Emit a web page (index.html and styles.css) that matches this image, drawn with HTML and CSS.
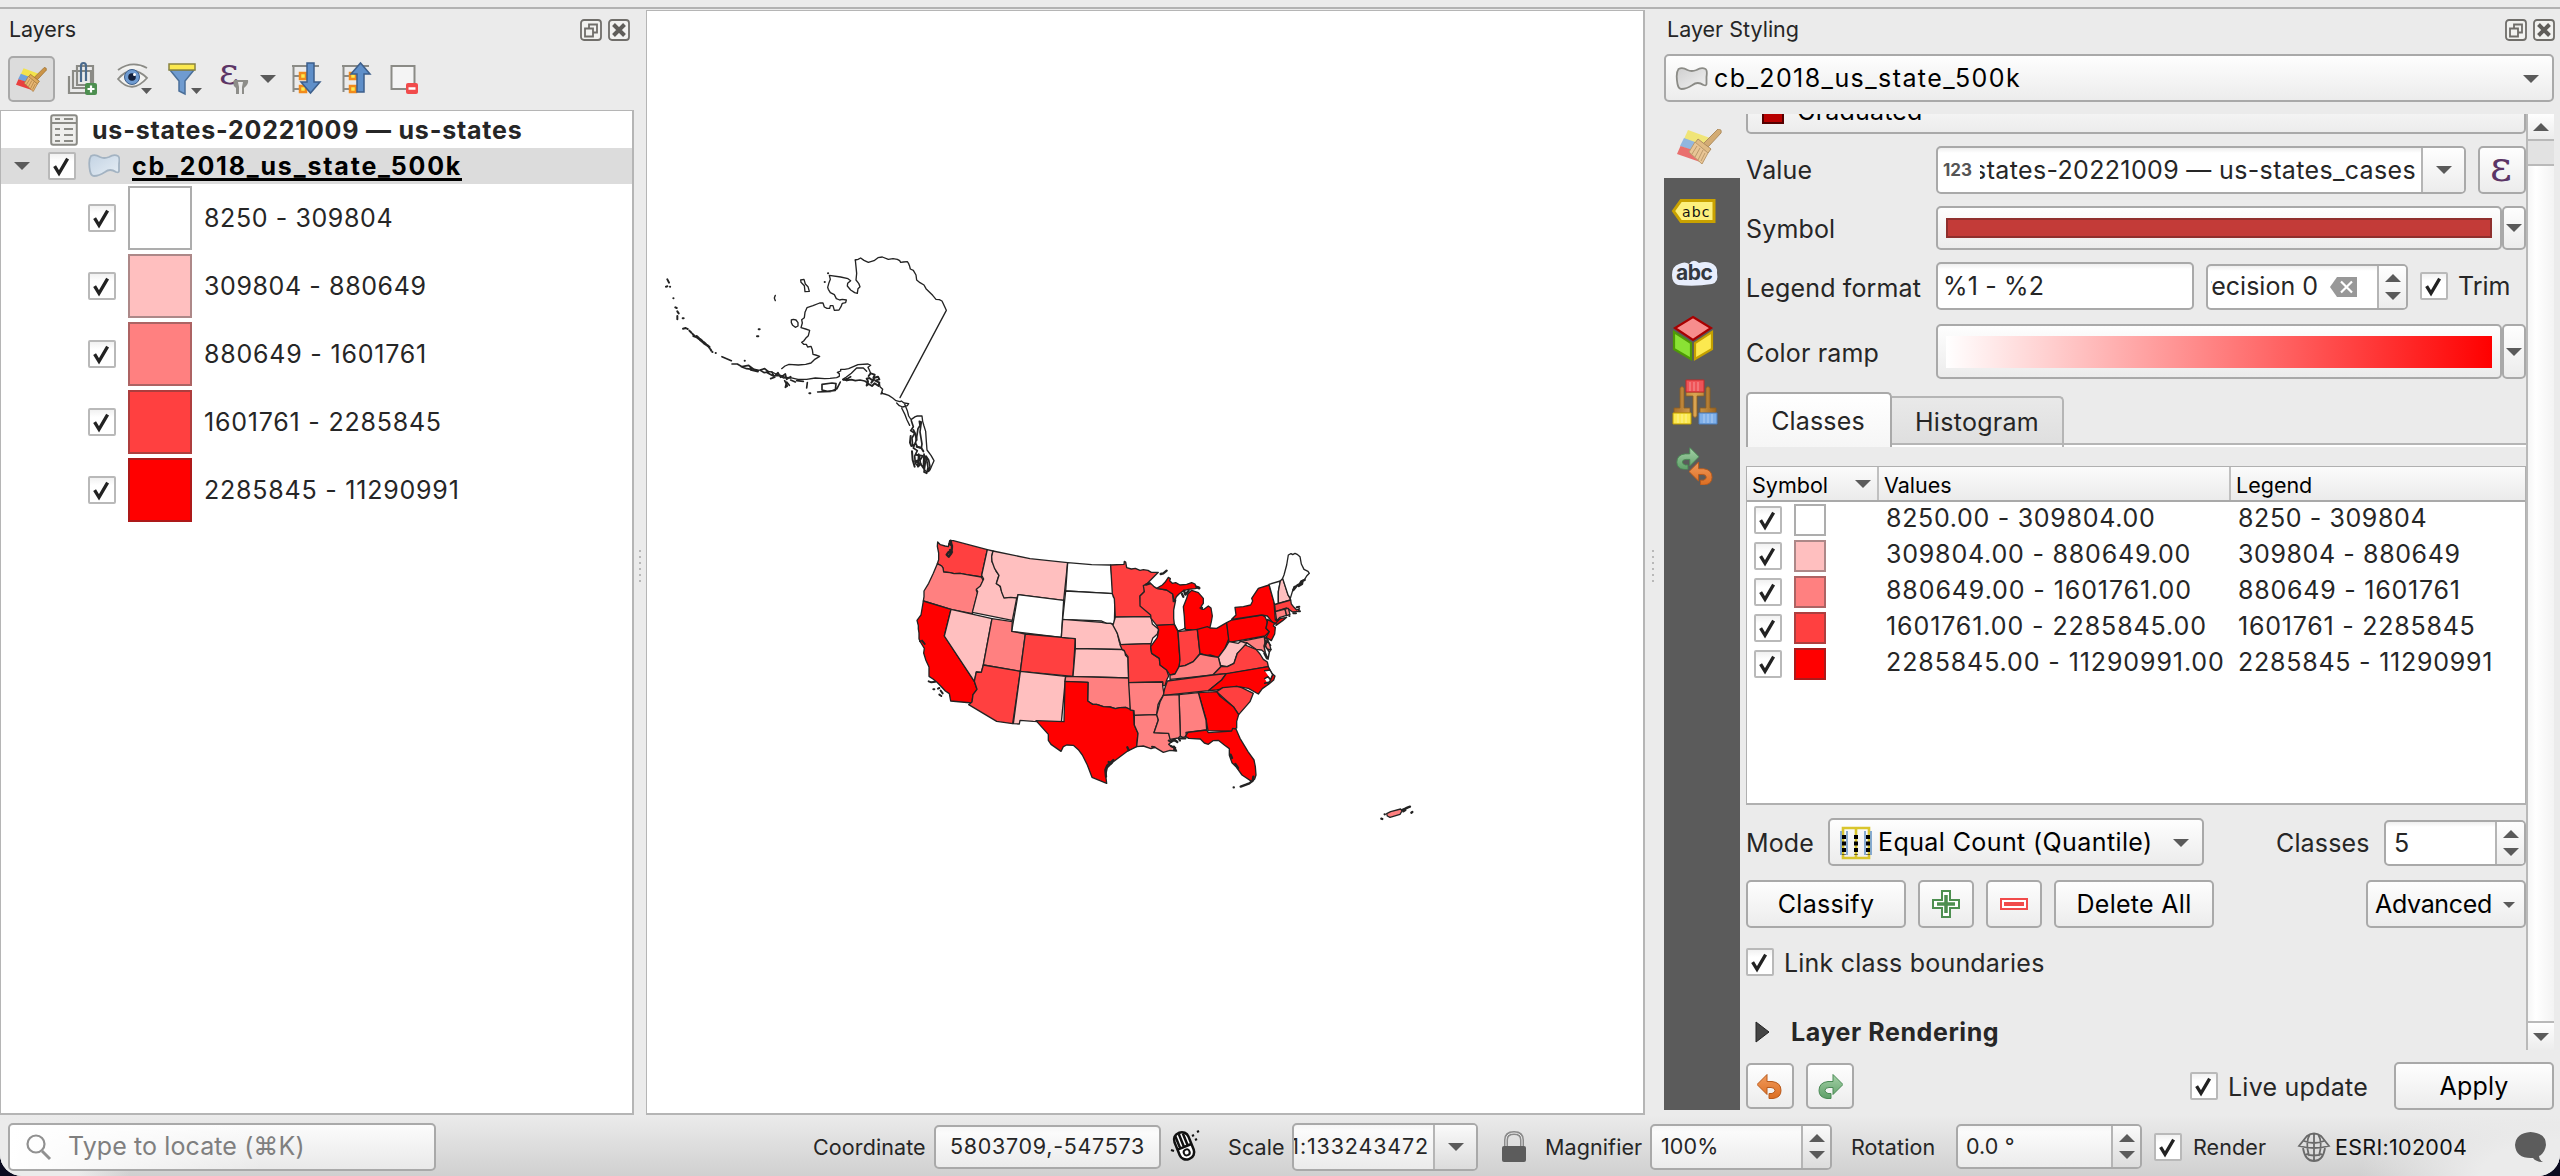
FILE: index.html
```
<!DOCTYPE html>
<html lang="en">
<head>
<meta charset="utf-8">
<title>QGIS</title>
<link rel="stylesheet" href="styles.css">
</head>
<body>
<svg width="0" height="0" class="defs" aria-hidden="true">
  <defs>
    <linearGradient id="polyBlue" x1="0" y1="0" x2="1" y2="1"><stop offset="0" stop-color="#c3d3e3"/><stop offset="1" stop-color="#e6eef5"/></linearGradient>
    <linearGradient id="polyGrey" x1="0" y1="0" x2="1" y2="1"><stop offset="0" stop-color="#cfcfcf"/><stop offset="1" stop-color="#f2f2f2"/></linearGradient>
    <linearGradient id="wood" x1="0" y1="0" x2="1" y2="0"><stop offset="0" stop-color="#a9702a"/><stop offset=".5" stop-color="#dba552"/><stop offset="1" stop-color="#9b6420"/></linearGradient>
    <linearGradient id="orange" x1="0" y1="0" x2="0" y2="1"><stop offset="0" stop-color="#f09a5c"/><stop offset="1" stop-color="#dc6e22"/></linearGradient>
    <linearGradient id="green" x1="0" y1="0" x2="0" y2="1"><stop offset="0" stop-color="#a5d2a8"/><stop offset="1" stop-color="#5f9f68"/></linearGradient>
  </defs>
  <symbol id="check" viewBox="0 0 24 24"><path d="M4.6 12.2l4.4 7.2L17.6 4.6" fill="none" stroke="#222" stroke-width="3.3"/></symbol>
  <symbol id="down" viewBox="0 0 16 8"><path d="M0 0h16L8 8z" fill="#5a5a5a"/></symbol>
  <symbol id="up" viewBox="0 0 16 8"><path d="M0 8h16L8 0z" fill="#5a5a5a"/></symbol>
  <symbol id="float" viewBox="0 0 22 22"><rect x="1" y="1" width="20" height="20" rx="3" fill="#f2f2f0" stroke="#706e6a" stroke-width="1.8"/><path d="M9 5.5h8v8h-8z" fill="none" stroke="#706e6a" stroke-width="1.8"/><path d="M5 9.500h8v8h-8z" fill="#f2f2f0" stroke="#706e6a" stroke-width="1.800"/></symbol>
  <symbol id="close" viewBox="0 0 22 22"><rect x="1" y="1" width="20" height="20" rx="3" fill="#f2f2f0" stroke="#706e6a" stroke-width="1.800"/><path d="M5.500 5.500l11 11M16.500 5.500l-11 11" stroke="#605e5a" stroke-width="4"/></symbol>
  <symbol id="brush" viewBox="0 0 45 35">
    <path d="M11 1L33 9L28 19L7 10z" fill="#f3e34c"/><path d="M7 9L29 17L25 25L3 17z" fill="#6fa3dd"/><path d="M3.500 17L22 23L26 34L0 25z" fill="#e9403f"/>
    <path d="M41 0q4 0 3 4L31 18l-5-3z" fill="#cb9447" stroke="#976a2b"/><path d="M21 10l13 10-3 4-13-10z" fill="#dda95d" stroke="#976a2b"/><path d="M18 13l13 11-6 11L12 23z" fill="#e8b775" stroke="#a87b3c"/><path d="M20 17l-5 8m8-6l-5 9m8-7l-5 10m7-7l-4 8" stroke="#a87b3c"/>
  </symbol>
  <symbol id="poly" viewBox="0 0 32 24"><path d="M3 2q4-2 9 1q4 2 9 0q5-3 9-1q2 1 1 8v7q0 2-3 1q-6-4-11 0q-6 4-11 4q-3 0-4-5Q0 6 3 2z"/></symbol>
  <symbol id="undo" viewBox="0 0 26 24"><path d="M10 0v7h5q9 1 9 9q0 7-8 8h-4v-5h3q3-1 3-3q0-3-4-3h-4v7L0 10z" fill="url(#orange)" stroke="#b85a1c"/></symbol>
  <symbol id="redo" viewBox="0 0 26 24"><path d="M16 0v7h-5q-9 1-9 9q0 7 8 8h4v-5h-3q-3-1-3-3q0-3 4-3h4v7L26 10z" fill="url(#green)" stroke="#4a8a55"/></symbol>
</svg>

<div class="window">
  <div class="topstrip"></div>
  <main class="workspace">
    <section class="layers">
      <header class="dock-title"><span>Layers</span><svg width="22" height="22"><use href="#float"/></svg><svg width="22" height="22"><use href="#close"/></svg></header>
      <div class="toolbar">
        <div class="tool active"><svg width="31" height="25"><use href="#brush"/></svg></div>
        <svg width="30" height="34" viewBox="0 0 30 34" fill="none" stroke="#8b8b86" stroke-width="2.200"><path d="M1 14v17h20M5 9v17h18V9zM9 4h16v19H9z"/><path d="M13 20V4q0-3 2.500-3T18 4v15" stroke="#4a6a8d"/><rect x="17" y="21" width="12" height="12" rx="2" fill="#4d8f50" stroke="none"/><path d="M23 23.500v7M19.500 27h7" stroke="#fff"/></svg>
        <svg width="36" height="34" viewBox="0 0 36 34"><path d="M1 8Q15-2 30 6M1 17Q15 1 30 16Q15 33 1 17z" fill="#f3f3f1" stroke="#8b8b86" stroke-width="1.800"/><circle cx="15" cy="15" r="7.500" fill="#6f9bd0" stroke="#3d5f8c"/><circle cx="15" cy="15" r="3.800" fill="#14203a"/><circle cx="17.500" cy="12.500" r="1.500" fill="#fff"/><path d="M24 26h11l-5.500 6z" fill="#5a5a5a"/></svg>
        <svg width="35" height="34" viewBox="0 0 35 34"><path d="M2 8L11 19V29l6 3V19L26 8z" fill="#6f9bd0" stroke="#4b6f99" stroke-width="1.500"/><rect x="1" y="2" width="26" height="6" fill="#fbe94f" stroke="#8a8440" stroke-width="1.500"/><path d="M23 26h11l-5.500 6z" fill="#5a5a5a"/></svg>
        <svg width="30" height="34" viewBox="0 0 30 34"><text x="-1" y="22" class="eps" font-size="38">ε</text><path d="M14 18h14q1 4-4 8v6h-8v-6q-4-3-2-8z" fill="#8d8d89"/><path d="M18 20h5l-1 5v7h-3v-7z" fill="#ebebeb"/></svg>
        <svg width="16" height="8" class="gap-s"><use href="#down"/></svg>
        <svg width="32" height="34" viewBox="0 0 32 34"><path d="M2 4h27M3.500 4v26M3.500 14h6M3.500 27h6" stroke="#8b8b86" stroke-width="2" fill="none"/><path d="M10 11h6v6h-6zM10 24h6v6h-6z" fill="#fbe94f" stroke="#f18a1c" stroke-width="2.500"/><path d="M17 1h7v19h6L20.500 31 11 20h6z" fill="#5f8fc9" stroke="#3d5f8c" stroke-width="1.500"/></svg>
        <svg width="32" height="34" viewBox="0 0 32 34" class="gap-m"><path d="M2 4h27M3.500 4v26M3.500 14h6M3.500 27h6" stroke="#8b8b86" stroke-width="2" fill="none"/><path d="M10 11h6v6h-6zM10 24h6v6h-6z" fill="#fbe94f" stroke="#f18a1c" stroke-width="2.500"/><path d="M17 30h7V12h6L20.500 1 11 12h6z" fill="#5f8fc9" stroke="#3d5f8c" stroke-width="1.500"/></svg>
        <svg width="30" height="32" viewBox="0 0 30 32" class="gap-m"><rect x="1.500" y="3" width="23" height="23" fill="#f4f4f4" stroke="#8b8b86" stroke-width="2"/><rect x="16" y="20" width="12" height="11" rx="2" fill="#f14b4b"/><path d="M18.500 25.500h7" stroke="#fff" stroke-width="2.500"/></svg>
      </div>
      <div class="tree">
        <div class="row root"><svg width="28" height="32" viewBox="0 0 28 32"><rect x="1.200" y="1.200" width="25.600" height="29.600" rx="2" fill="#efefed" stroke="#8b8b86" stroke-width="2"/><path d="M1 9h26M5 5h5m4 0h9M5 15h5m4 0h9M5 21h5m4 0h9M5 27h5m4 0h9" stroke="#8b8b86" stroke-width="2"/></svg><b class="t-us">us-states-20221009 — us-states</b></div>
        <div class="row layer"><svg width="16" height="8"><use href="#down"/></svg><i class="cb"><svg><use href="#check"/></svg></i><svg width="32" height="24" fill="url(#polyBlue)" stroke="#a3b3c2" stroke-width="1.800"><use href="#poly"/></svg><b class="t-cb">cb_2018_us_state_500k</b></div>
        <div class="row cls"><i class="cb"><svg><use href="#check"/></svg></i><i class="sw c1"></i><span>8250 - 309804</span></div>
        <div class="row cls"><i class="cb"><svg><use href="#check"/></svg></i><i class="sw c2"></i><span>309804 - 880649</span></div>
        <div class="row cls"><i class="cb"><svg><use href="#check"/></svg></i><i class="sw c3"></i><span class="w1">880649 - 1601761</span></div>
        <div class="row cls"><i class="cb"><svg><use href="#check"/></svg></i><i class="sw c4"></i><span class="w1">1601761 - 2285845</span></div>
        <div class="row cls"><i class="cb"><svg><use href="#check"/></svg></i><i class="sw c5"></i><span class="w1">2285845 - 11290991</span></div>
      </div>
    </section>
    <div class="splitter one"><i></i></div>
    <section class="map">
      <svg width="996" height="1102" viewBox="647 11 996 1102" stroke="#232323" stroke-width="4" stroke-linejoin="round" stroke-linecap="round">
        <!-- Alaska -->
        <g transform="translate(650 230) scale(.33333)" fill="none">
          <path d="M616 90l8-2 8-4 10 7 13 6 17-5 12-9 13-2 18 7 14-2 13 2 7 4 3 5 8-1 12-1 4 6 3 8 2 8 9 4L798 135 800 150 810 158 822 165 828 176 838 186 848 196 858 208 868 209 876 213 882 226 889 241 750 503"/>
          <path d="M616 90l2 20 2 20-2 20 8 10 4 10-6 6-2 14-8-2-12-8-10-12 1-8 9-8-8-6-22-5-34-5 3 12-4 10-4 14 2 6 6 10 12 6 6 12 10 4 8-2 12 2-2 8-10 2-4 10-6 10-14 1-4-14-8 0-2 8-8 0-8-4-4-12-10 0-20 8-18 6-6 14-2 16-8 6 2 10-4 14 14 4 12 4-4 16-8 8-6 8-6 4 6 6 8 0 4 8 10-2 4 10 2 14 8 2 12 4-16 10-10 10-16 4-22 2-28-2-12 5-10 8"/>
          <path d="M352 424l14 2 24 12 10 6 18-2 26 6 26 0 26-4 28 2 16-1 20-2 8-4 0-8-6-4 10-4 0-5 12 0 12-2 28-12 30-2 8 4-8 6 4 8 4 10M650 424l-10-10-20 0-16 16-16 12-10 6 12 4"/>
          <path d="M688 460l2 10 8 8-4 12 10 2 12 4 12 8 10 8 12 3 4-2 8 6 14 2-4 6-14 4-10-4-8-8M755 534l10 20 6 16 8 16M764 522l8 20 4 16 8 12M784 568l12-8 6-2 14 0 2 16 4 14 5 16 2 30 2 26 12 16 9 16-6 14-6 14-10 6-8-8"/>
          <path d="M590 451l14-2 12 3 14-2 14 3 10 6M602 440l-10 6-12 4M516 463l30-4 12 2-2 20-24 3-16-4zM503 486l40-2 18-8 10-20" stroke-width="5"/>
          <path d="M656 438l6-8 12 4-4 10 14-4 4 8-12 4 12 6-2 10-12-8-8 8-10-6-6 4 4-12-4-8 8-2 8 6 6-2-8 10" stroke-width="6"/>
          <path d="M784 572l6 18-8 12 12 8-8 14 2 24 8-6 4-20 4-26 6-10-2-12 6 2-4 30 6 36-2 12-12-4-6-12-6 16 12 8-8 16 2 22 8 8 2-36 6 30 8 12 2-42 4 26-4 28 8 4 4-18-6-34 8 12 4 20-4 14" stroke-width="5"/>
          <path d="M790 600l6 12 4 18M782 618l-2 20 4 10M786 664l2 26 6 20M800 650l14 4 6 10M798 674l20 4-8 12-14 4 16 8-8 8" stroke-width="6"/>
          <path d="M99 296l8-2 6 3M118 302l14 14 8 6 10 8 14 12 12 8 8 12M130 318l14 5M140 318l14 12 16 14 10 8" stroke-width="6" stroke-dasharray="9 5"/>
          <path d="M216 380l14 6 14 6M246 402l16 0 14 8 20-4 10 12-16-2-16-6M296 406l16 12 14 3M302 420l22 5M330 420l14-4 12 10-14 2zM352 428l18 10 20-2 20 8 12 0M366 426l6 14 12-12 8 14 14-10 4 16 12-8M362 446l12-4M404 452l8 16-6 4 4-16 8 10M422 450l14 6M440 452l20 2M472 458l-2 16" stroke-width="5"/>
          <path d="M52 148l5 10M48 170l4-1M60 170h.5M70 205h.5M76 232l4 2M82 244l4 6M82 258v10M98 265h3M187 366h.5M197 369h.5M284 392h.5M326 298h3M321 319h4M534 130h.5M524 156h.5M478 490h3" stroke-width="6"/>
          <path d="M452 150l10-2 4 14 8 8 4 14-13 1-2-18-10-10zM376 196l-3 8 3 8M424 270l6-2 8 2 6 8 0 10-8 4-8-6-4-8zM697 487l-4 5"/>
        </g>
        <!-- Lower 48, western half -->
        <g transform="translate(900 520) scale(.33333)">
          <path class="m4" d="M113 66l8 8 14 4 10 2 4-18 11 0 102 27-18 82-44-7-20-4-18 1-12-3-19-2-2-12-4-6-13-7 4-12 0-20-4-20z"/>
          <path d="M152 62l4 18-2 20-8 10-6-6 6-8 8 4M148 72l8 4M150 90l6 6" fill="none" stroke-width="7"/>
          <path class="m3" d="M112 131l13 7 4 6 2 12 19 2 12 3 18-1 20 4 44 7 6 11-6 12-6 10-9 7 4 8-16 62-64-13-83-25 2-13 0-17 14-23 14-30z"/>
          <path class="m5" d="M70 243l83 25-20 80 90 136 8 24-12 16-2 14 0 11-65-6-4-22-12-8-11-12-14-14-12-10-12-8 0-14 0-14-10-22-6-20 2-14-10-16-6-12 0-18-2-12 0-10-4-16 6-8 6-8z"/>
          <path d="M60 364h.5M66 362l8 10M86 484l8 3 12-2M100 508h3M114 506l4-2M122 512l6 8M118 524l6 4" stroke-width="6" fill="none"/>
          <path class="m2" d="M153 268l123 28-26 138-6 23-15-1-6 28-90-136z"/>
          <path class="m2" d="M262 89l17 4-4 17 1 15 8 14 4 14 9 12-4 12-4 13 10 6 6 18 7 16 20-1 19 1-14 71-120-24 16-62-4-7 12-10 10-21-6-11z"/>
          <path class="m2" d="M279 93l111 23 113 12-12 113-137-17-3 10-19-2-20 2-7-17-4-18-12-8 8-25-13-20-8-22-1-14z"/>
          <path class="m1" d="M354 224l137 17-7 111-149-18z"/>
          <path class="m3" d="M276 296l61 9-2 29 41 8-15 112-111-19z"/>
          <path class="m4" d="M250 435l111 19-23 157-48-7-84-50 10-8 3-22 12-16-8-24 6-28 15 1z"/>
          <path class="m4" d="M376 342l150 14-7 113-158-15z"/>
          <path class="m2" d="M361 454l136 15-13 139-84-4-40-3-2 11-18-1z"/>
          <path class="m1" d="M503 128l72 6 57 1 4 40 4 46-143-8z"/>
          <path class="m1" d="M497 213l143 8 0 10 5 4-2 79-10-4-13 0-15-7-117-5z"/>
          <path class="m2" d="M488 298l117 9 15 3 12 0 11 6 9 24 6 26 10 22-142-3v-29l-42-4z"/>
          <path class="m2" d="M526 386l142 3 8 6 0 10 8 8 2 61-167-5z"/>
          <path class="m3" d="M497 469l189 5 5 46v50l-14-8-17 1-14 3-16-5-20-1-20-7-12 0-15-10 1-56-69-3z"/>
          <path class="m5" d="M495 484l69 3-1 56 15 10 12 0 20 7 20 1 16 5 14-3 17-1 23 10 3 43 11 25-4 40-30 15-40 30-18 18-5 22 3 25-44-18-14-37-15-30-12-16-15-13-20-1-10 5-7 14-30-21-8-12 0-18-37-41 84 3z"/>
          <path d="M682 682l4 8M640 720l-18 16-6 14 2 20M626 726l8 4" fill="none" stroke-width="7"/>
          <path class="m4" d="M632 135l40-2 1-9 4 2 3 17 14 4 12-2 14 6 10-2 14 2 10 6 21 0-40 40-2 18-13 13 2 27 28 25 3 9-107 3-3-56-6-15z"/>
          <path class="m2" d="M646 291l107-1 4 22 19 16-4 14-14 13-5 16-91 3-10-34-13-24z"/>
          <path class="m4" d="M660 374l93-3-1 13 3 16 23 15 2 20 20 15 6 18-6 12-5 17-7 0 0-11-102 2-2-78-8-10-3-8-7-4z"/>
          <path class="m3" d="M686 488l102-2 0 12 4 24-12 20-6 12-4 30-67 2-1-14-11-2z"/>
          <path class="m3" d="M703 586l67-2 5 16-13 38 44 2 9 25-9 8 20 14 4 6-20-2-20 6-25-15-12 4-23-8-20 2 4-40-11-25z"/>
          <path d="M756 680l8 2M806 662l8 4 6-8M812 678l14 6-4 6M836 656l4 6" fill="none" stroke-width="6"/>
        </g>
        <!-- Lower 48, eastern half -->
        <g transform="translate(1130 520) scale(.33333)">
          <path class="m4" d="M40 197l16-8 7 2 8 8 9 6 30 5 18 12 2 23 7-5-6 30 0 25 2 18-53 3-17-21-1-10-32-27 0-30 13-13z"/>
          <path class="m5" d="M80 205l17-10 8-8 10-15 6 4-2 6 8 8 10-2 13 7 20-2 15-5 10 4 2 6 12 4-14 4-20 2-14 4-14 10-8 8-6 15-5-23-18-12z"/>
          <path class="m5" d="M165 328l-2-38-3-30 10-25 4-14 11-10 20 7 15 17 0 15-6 8 2 10 6 0 13-10 8 6 2 12 2 12-3 17-4 17-8 6-6 3z"/>
          <path d="M92 162l8-2 10-8M48 194l12-4M156 222l4 8M162 212l4 12 10-12M200 201l8 4M212 264h4" fill="none" stroke-width="7"/>
          <path d="M133 313l11 20 14-5 8-4" fill="none"/>
          <path class="m5" d="M80 316l53-3 11 22 6 85-2 20-13 22-15 3-10-15-20-15-2-20-23-15-3-20 20-28 4-22z"/>
          <path class="m4" d="M144 335l58-7 8 72-20 25-25 12-18 3 3-20z"/>
          <path class="m5" d="M202 328l30-8 8 4 20 1 30-17 7 47-12 30-20 27-25-7-10 2-20-7z"/>
          <path class="m5" d="M290 308l15-8 90-15 10 5 7 15-4 20 10 10-13 13-108 19z"/>
          <path class="m5" d="M305 298l13-13-3-23 25-2 22-5 6-12-3-8 20-30 32-10 15 50 4 55 26-3-22 14-12-3-16-20-17-3z"/>
          <path class="m5" d="M412 298l22 12-4 8 6 4-2 20-10 20-16-10 10-17-10-10 4-17z"/>
          <path class="m1" d="M417 193l34-10-6 32v35l-11 4z"/>
          <path class="m2" d="M451 183l7-8 17 50 7 15-37 10v-35z"/>
          <path class="m1" d="M458 175l4-10 8-30 5-30 8-4 5 3 7-4 8 4 7 6 4 22 8 16 12 6 4 6-8 8-6 10-12 10-8 8-12 4-4 12-7 23-7-10z"/>
          <path d="M524 180l-10 4-8 14 10-6 2-10-8 10-8 4M498 200l-8 10" fill="none" stroke-width="7"/>
          <path class="m4" d="M434 254l48-14 2 12 8 10 8 8 8-4-2 8-18 2-12-8-6-4-34 11z"/>
          <path class="m3" d="M436 275l29-8 5 19-20 6-10 10z"/>
          <path class="m3" d="M465 267l10-2 5 18-10 4z"/>
          <path class="m5" d="M438 308l12-12 20-4-12 10-20 14z"/>
          <path d="M500 262l8-2M478 288h.5M490 280l8 0M506 274h4" fill="none" stroke-width="6"/>
          <path class="m3" d="M330 365l75-15 3 35 15 4-11 16-17-15-17-2-28-20-20 6z"/>
          <path class="m3" d="M403 352l10 6 6 16 4 15-15-2z"/>
          <path class="m2" d="M265 412l20-27 12-20 28 5 8-6 17 6-15 20-13 10-10 30-20 10-20-4z"/>
          <path class="m4" d="M248 465l24-25 20 0 20-10 10-30 23-25 33 13 12 14 10 16 12 8 3 14-115 20z"/>
          <path class="m3" d="M120 478v-13l15-3 12-22 18-3 25-12 20-23 30 6 25 4 7 28-24 25-68 7z"/>
          <path class="m4" d="M112 483l136-18 41-4-14 19-40 32-135 14 4-20z"/>
          <path class="m5" d="M289 461l126-21 10 20 10 8-4 12-14 12-20 14-12 16-30-17-35-6-60 11-25 2 40-32z"/>
          <path d="M408 360l-6 18 4 20 8 20 4-22-12-18 6-16 10 14M402 400l8 16M404 452l16-2 8 14-6 14M404 476l10-6 8 10-8 12M404 490l14-4" fill="#fff" stroke-width="4.500"/>
          <path class="m4" d="M260 515l18-12 42-4 15 4 35 17-10 25-34 39-16-24z"/>
          <path class="m5" d="M205 518l55-3 10 14 40 31 16 24-6 20 0 20-5 2-1 8-80-2-6-35z"/>
          <path class="m3" d="M147 524l58-6 23 82 2 30-62 7 2 13-12 2-7-4z"/>
          <path class="m3" d="M100 526l47-2 4 124-6 6-25 4-4-18-44-2 13-38-5-16 10-38z"/>
          <path d="M124 664l10-4 8 6M132 680l4 10M150 655l16 0" fill="none" stroke-width="7"/>
          <path class="m5" d="M174 637l56-7 5 8 70-5 3-8 10 2 12 28 24 40 18 25 4 20 2 25-4 12-8 8-30-20-18-25-12-12-8-22 0-20-14-10-19-15-16 1-14 11-12-4-12-12-35-2-10-6z"/>
          <path d="M302 704l4 10M316 732l8 12M370 770l-2 12-10 8-10 4M348 794l-16 6M311 802h.5" fill="none" stroke-width="7"/>
        </g>
        <!-- Puerto Rico -->
        <g transform="translate(1340 780) scale(.33333)"><path class="m3" d="M140 101l12-6 30-8 4 6-6 10-30 9-8-4z"/><path d="M186 90l10-4 8-4 6-2M190 94l6-4M214 98l3-2M124 116l3 1M134 103h.5" stroke-width="7"/></g>
      </svg>
    </section>
    <div class="splitter two"><i></i></div>
    <section class="styling">
      <header class="dock-title"><span>Layer Styling</span><svg width="22" height="22"><use href="#float"/></svg><svg width="22" height="22"><use href="#close"/></svg></header>
      <div class="combo layer-combo"><svg width="33" height="24" fill="url(#polyGrey)" stroke="#8b8b86" stroke-width="1.800"><use href="#poly"/></svg><span class="wide">cb_2018_us_state_500k</span><svg width="16" height="8"><use href="#down"/></svg></div>
      <div class="body">
        <nav class="tabs">
          <div class="tab on"><svg width="45" height="35" class="faded"><use href="#brush"/></svg></div>
          <div class="tab"><svg width="44" height="26" viewBox="0 0 44 26"><path d="M9 1.500h33v21H9L1.500 12z" fill="#fdf07c" stroke="#c9a200" stroke-width="3"/><text x="10" y="18" font-family="DejaVu Sans" font-size="14" letter-spacing="1.200" fill="#111">abc</text></svg></div>
          <div class="tab"><svg width="48" height="30" viewBox="0 0 48 30"><path d="M8 5Q14 2 18 5Q22-1 28 4Q34 2 40 4Q47 7 46 14Q48 23 41 25Q24 28 7 26Q1 24 1 16Q1 7 8 5z" fill="#e8eefc"/><text x="5" y="21" font-family="Inter" font-weight="bold" font-size="21" textLength="37" fill="#33383f">abc</text></svg></div>
          <div class="tab"><svg width="42" height="46" viewBox="0 0 42 46" stroke-width="2.200"><path d="M21 2l18 11-18 12L3 13z" fill="#f78d8d" stroke="#a80000"/><path d="M2 17l17 11v16L2 34z" fill="#8ae234" stroke="#4e9a06"/><path d="M40 17L23 28v16l17-10z" fill="#fce94f" stroke="#c4a000"/></svg></div>
          <div class="tab"><svg width="46" height="46" viewBox="0 0 46 46"><path d="M8 9q2-3 4 0v20h6v5H2v-5h6zM34 9q2-3 4 0v20h6v5H28v-5h6zM14 13h18v4h-7v20q-2 3-4 0V17h-7z" fill="url(#wood)" stroke="#8d5d1f" stroke-width=".8"/><path d="M14 1h18v12H14z" fill="#ef5357" stroke="#c02a2a"/><path d="M1 34h18v11H1z" fill="#fce94f" stroke="#c4a000"/><path d="M27 34h18v11H27z" fill="#7fb0ea" stroke="#4c7fbd"/><path d="M18 3v9m4-9v9m4-9v9M6 35v9m4-9v9m4-9v9M32 35v9m4-9v9m4-9v9" stroke="#fff" stroke-opacity=".4"/></svg></div>
          <div class="tab"><svg width="40" height="40" viewBox="0 0 40 40"><svg width="24" height="23" x="0" y="1" viewBox="0 0 26 24"><use href="#redo"/></svg><svg width="25" height="23" x="14" y="16" viewBox="0 0 26 24"><use href="#undo"/></svg></svg></div>
        </nav>
        <div class="page">
          <div class="scroll">
            <div class="form">
              <div class="combo graduated"><i></i><span>Graduated</span></div>
              <div class="line value"><label>Value</label><div class="field expr"><b>123</b><span class="clip"><span>us-states-20221009 — us-states_cases</span></span><em><svg width="16" height="8"><use href="#down"/></svg></em></div><div class="btn epsbtn"><svg width="32" height="36" viewBox="0 0 32 36"><text x="4" y="29" class="eps" font-size="42">ε</text></svg></div></div>
              <div class="line symbol"><label>Symbol</label><div class="btn bar"><i class="solid"></i></div><div class="btn mini"><svg width="16" height="8"><use href="#down"/></svg></div></div>
              <div class="line legend"><label>Legend format</label><div class="field fmt">%1 - %2</div><div class="field spin prec"><span class="clip"><span>Precision 0</span></span><svg width="27" height="20" viewBox="0 0 27 20"><path d="M7 0h20v20H7L0 10z" fill="#989898"/><path d="M11 4.500l11 11m0-11l-11 11" stroke="#fff" stroke-width="2.200"/></svg><em><svg width="16" height="8"><use href="#up"/></svg><svg width="16" height="8"><use href="#down"/></svg></em></div><i class="cb"><svg><use href="#check"/></svg></i><span class="trim">Trim</span></div>
              <div class="line ramp"><label>Color ramp</label><div class="btn bar"><i class="gradient"></i></div><div class="btn mini"><svg width="16" height="8"><use href="#down"/></svg></div></div>
              <div class="tabbar"><div class="t-on">Classes</div><div class="t-off">Histogram</div><div class="t-rest"></div></div>
              <div class="table">
                <div class="thead"><div>Symbol<svg width="16" height="8"><use href="#down"/></svg></div><div>Values</div><div>Legend</div></div>
                <div class="trow"><div><i class="cb"><svg><use href="#check"/></svg></i><i class="sw c1"></i></div><span class="w0">8250.00 - 309804.00</span><span>8250 - 309804</span></div>
                <div class="trow"><div><i class="cb"><svg><use href="#check"/></svg></i><i class="sw c2"></i></div><span>309804.00 - 880649.00</span><span>309804 - 880649</span></div>
                <div class="trow"><div><i class="cb"><svg><use href="#check"/></svg></i><i class="sw c3"></i></div><span class="w2">880649.00 - 1601761.00</span><span class="w1">880649 - 1601761</span></div>
                <div class="trow"><div><i class="cb"><svg><use href="#check"/></svg></i><i class="sw c4"></i></div><span class="w2">1601761.00 - 2285845.00</span><span class="w1">1601761 - 2285845</span></div>
                <div class="trow"><div><i class="cb"><svg><use href="#check"/></svg></i><i class="sw c5"></i></div><span class="w2">2285845.00 - 11290991.00</span><span class="w1">2285845 - 11290991</span></div>
              </div>
              <div class="line mode"><label>Mode</label><div class="combo quant"><svg width="32" height="34" viewBox="0 0 32 34"><path d="M3 2h26v30H3zM16 2v30" fill="none" stroke="#d9c52c" stroke-width="2.600"/><path d="M1 5v24M7 5v24M25 5v24M31 5v24" stroke="#6b98c9" stroke-width="1.600"/><path d="M4 9v20M16 9v20M28 9v20" stroke="#000" stroke-width="4" stroke-dasharray="4 2.500"/></svg><span>Equal Count (Quantile)</span><svg width="16" height="8"><use href="#down"/></svg></div><label class="cl">Classes</label><div class="field spin num"><span>5</span><em><svg width="16" height="8"><use href="#up"/></svg><svg width="16" height="8"><use href="#down"/></svg></em></div></div>
              <div class="line actions"><div class="btn classify">Classify</div><div class="btn sq"><svg width="28" height="28" viewBox="0 0 28 28"><path d="M10 1h8v9h9v8h-9v9h-8v-9H1v-8h9z" fill="#fff" stroke="#4d8f50" stroke-width="2"/><path d="M14 5v18M5 14h18" stroke="#4d8f50" stroke-width="3.500"/></svg></div><div class="btn sq"><svg width="28" height="12" viewBox="0 0 28 12"><rect x="1" y="1" width="26" height="10" fill="#fff" stroke="#f14b4b" stroke-width="2"/><path d="M4 6h20" stroke="#f14b4b" stroke-width="4"/></svg></div><div class="btn classify">Delete All</div><div class="btn adv">Advanced<svg width="12" height="6"><use href="#down"/></svg></div></div>
              <div class="line link"><i class="cb"><svg><use href="#check"/></svg></i><span>Link class boundaries</span></div>
              <div class="line rendering"><svg width="15" height="22" viewBox="0 0 15 22"><path d="M1 1l13 10L1 21z" fill="#444" stroke="#222"/></svg><b>Layer Rendering</b></div>
            </div>
            <div class="scrollbar"><div class="sb up"><svg width="16" height="8"><use href="#up"/></svg></div><div class="thumb"></div><div class="sb dn"><svg width="16" height="8"><use href="#down"/></svg></div></div>
          </div>
          <div class="footer"><div class="btn hist"><svg width="26" height="25"><use href="#undo"/></svg></div><div class="btn hist"><svg width="26" height="25"><use href="#redo"/></svg></div><i class="cb"><svg><use href="#check"/></svg></i><span>Live update</span><div class="btn apply">Apply</div></div>
        </div>
      </div>
    </section>
  </main>
  <footer class="status">
    <div class="field locate"><svg width="26" height="26" viewBox="0 0 26 26" fill="none" stroke="#909090"><circle cx="10" cy="10" r="8.500" stroke-width="2.200"/><path d="M16 17l8 8" stroke-width="3"/></svg><span>Type to locate (⌘K)</span></div>
    <span>Coordinate</span>
    <div class="field coord">5803709,-547573</div>
    <svg width="32" height="34" viewBox="0 0 32 34"><g transform="rotate(-22 14 17)"><rect x="7" y="2" width="15" height="28" rx="7" fill="#fff" stroke="#111" stroke-width="2.500"/><path d="M10 4v12M14 3v13M18 4v12M7 17h15" stroke="#111" stroke-width="2.500"/><circle cx="14.500" cy="23" r="3" fill="none" stroke="#111" stroke-width="2"/></g><path d="M22 6l2-1M27 2l2-1M25 10l2-1M1 20l3 1" stroke="#111" stroke-width="2.200"/></svg>
    <span>Scale</span>
    <div class="field scale"><span class="clip"><span>1:133243472</span></span><em><svg width="16" height="8"><use href="#down"/></svg></em></div>
    <svg width="26" height="32" viewBox="0 0 26 32" class="lock"><path d="M5 16V9q0-7 8-7t8 7v7" fill="none" stroke="#8a8a8a" stroke-width="4"/><path d="M5 16V9q0-7 8-7t8 7v7" fill="none" stroke="#e8e8e8" stroke-width="1"/><rect x="1" y="15" width="24" height="16" rx="2" fill="#5c5c5c"/></svg>
    <span>Magnifier</span>
    <div class="field spin mag"><span>100%</span><em><svg width="16" height="8"><use href="#up"/></svg><svg width="16" height="8"><use href="#down"/></svg></em></div>
    <span>Rotation</span>
    <div class="field spin rot"><span>0.0 °</span><em><svg width="16" height="8"><use href="#up"/></svg><svg width="16" height="8"><use href="#down"/></svg></em></div>
    <i class="cb"><svg><use href="#check"/></svg></i>
    <span>Render</span>
    <svg width="32" height="30" viewBox="0 0 32 30" fill="none" stroke="#6a6a6a" stroke-width="1.800"><path d="M9 4Q16-1 23 4L31 14Q16 18 1 14zM6 9q10 4 20 0M5 16q2 13 11 13t11-13M8 22q8 3 16 0M12 2Q7 10 11 24M20 2q5 8 1 22M16 1v28"/></svg>
    <span class="crs">ESRI:102004</span>
    <svg width="33" height="32" viewBox="0 0 33 32"><path d="M16.500 1Q32 2 32 14Q31 22 25 25Q25 29 29 31Q22 31 19 27Q2 28 1 14Q2 2 16.500 1z" fill="#5c5c5c"/></svg>
  </footer>
</div>
</body>
</html>
```
FILE: styles.css
```
* { box-sizing: border-box; }
body { margin: 0; width: 2560px; height: 1176px; overflow: hidden; background: #0b0b20; font-family: Inter, "Noto Sans", sans-serif; font-size: 25px; line-height: 1; letter-spacing: .15px; color: #262626; }
.defs { position: absolute; }
svg { display: block; flex: none; overflow: visible; }
i { font-style: normal; display: block; flex: none; }
em { font-style: normal; }
span, b, label { white-space: nowrap; }
.window { width: 2560px; height: 1176px; background: #ebebeb; border-radius: 0 0 22px 22px; overflow: hidden; display: flex; flex-direction: column; }
.topstrip { height: 9px; border-bottom: 2px solid #b2b2b2; }
.workspace { height: 1106px; display: flex; }

.cb { width: 28px; height: 28px; border: 2px solid #b9b9b9; border-radius: 2px; background: linear-gradient(#f1f1f1, #fff 30%); }
.cb svg { width: 24px; height: 24px; }
.sw { border: 2px solid rgba(60, 60, 60, .42); background-clip: border-box; }
.c1 { background-color: #fff; }
.c2 { background-color: #ffbfbf; }
.c3 { background-color: #ff8080; }
.c4 { background-color: #ff4040; }
.c5 { background-color: #f00; }
.m1 { fill: #fff; }
.m2 { fill: #ffbfbf; }
.m3 { fill: #ff8080; }
.m4 { fill: #ff4040; }
.m5 { fill: #f00; }
.eps { font-family: "DejaVu Serif", serif; fill: #5c3566; }

.dock-title { height: 41px; display: flex; align-items: center; gap: 6px; font-size: 21.5px; letter-spacing: 0; }
.dock-title span { flex: 1; }
.layers { width: 634px; }
.layers .dock-title { padding: 0 4px 0 9px; letter-spacing: -.1px; }
.toolbar { height: 60px; padding: 0 0 2px 8px; display: flex; align-items: center; }
.tool.active { width: 47px; height: 46px; border: 2px solid #a9a9a9; border-radius: 5px; background: #dcdcdc; display: flex; align-items: center; justify-content: center; margin-right: 13px; }
.toolbar > svg { margin-right: 18px; }
.toolbar > svg:nth-child(2) { margin-right: 19px; }
.toolbar > svg:nth-child(3) { margin-right: 15px; }
.toolbar > svg:nth-child(4) { margin-right: 17px; }
.toolbar > svg:nth-child(5) { margin-right: 10px; }
.toolbar > svg:nth-child(6) { margin-right: 14px; }
.tree { height: 1005px; background: #fff; border: 2px solid #b5b5b5; border-width: 1px 2px 2px 1px; }
.row { display: flex; align-items: center; }
.root { height: 37px; padding-left: 49px; gap: 14px; }
.t-us { font-size: 25px; letter-spacing: .8px; padding-top: 1px; }
.layer { height: 36px; background: #dcdcdc; padding-left: 13px; color: #000; }
.layer .cb { margin: 0 12px 0 18px; }
.t-cb { margin-left: 12px; letter-spacing: 1.82px; position: relative; line-height: 36px; }
.t-cb::after { content: ""; position: absolute; left: 0; right: 0; top: 30px; height: 3px; background: #000; }
.cls { height: 68px; padding-left: 87px; }
.cls .sw { width: 64px; height: 64px; margin: 0 12px 0 12px; }
.cls span { letter-spacing: .6px; }
.cls .w1 { letter-spacing: .78px; }

.splitter { display: flex; align-items: center; justify-content: center; }
.splitter.one { width: 12px; }
.splitter.two { width: 19px; padding-right: 3px; }
.splitter i { width: 2px; height: 32px; margin-top: 8px; background: repeating-linear-gradient(#b8b8b8 0 2px, transparent 2px 6px); }
.map { width: 999px; height: 1105px; margin-top: 1px; background: #fff; border: 2px solid #b5b5b5; border-width: 1px 2px 2px 1px; overflow: hidden; }

.styling { flex: 1; }
.styling .dock-title { padding: 0 5px 4px 3px; height: 45px; }
.combo, .btn { border: 2px solid #a9a9a9; border-radius: 5px; background: linear-gradient(#fefefe, #ececec); color: #000; display: flex; align-items: center; }
.layer-combo { width: 890px; height: 48px; padding: 1px 13px 0 9px; }
.layer-combo span { flex: 1; margin-left: 6px; letter-spacing: 1.42px; }
.body { display: flex; margin-top: 12px; height: 996px; }
.tabs { width: 76px; }
.tab { background: #5b5b5b; display: flex; align-items: center; padding-left: 8px; }
.tab.on { height: 64px; background: none; padding: 1px 0 0 13px; }
.faded { opacity: .72; }
.tab:nth-child(2) { height: 64px; padding-top: 3px; }
.tab:nth-child(3) { height: 60px; padding: 3px 0 0 7px; }
.tab:nth-child(4) { height: 72px; }
.tab:nth-child(5) { height: 56px; }
.tab:nth-child(6) { height: 680px; align-items: flex-start; padding: 16px 0 0 11px; }
.page { margin-left: 6px; width: 808px; }
.scroll { height: 936px; display: flex; overflow: hidden; }
.form { width: 780px; }
.line { display: flex; align-items: center; }
label { width: 190px; padding-top: 2px; }
.field { border: 2px solid #a9a9a9; border-radius: 5px; background: linear-gradient(#efefef, #fff 5px); display: flex; align-items: center; overflow: hidden; }
.field em { align-self: stretch; border-left: 2px solid #b5b5b5; background: linear-gradient(#fefefe, #ececec); display: flex; flex-direction: column; align-items: center; justify-content: center; gap: 10px; }
.clip { display: flex; justify-content: flex-end; overflow: hidden; height: 34px; align-items: center; }
.graduated { height: 48px; margin-top: -28px; padding: 2px 0 0 14px; }
.graduated i { width: 22px; height: 22px; margin-right: 13px; background: #b80000; border: 2px solid #500; position: relative; top: 2px; }
.value { margin-top: 12px; height: 48px; }
.value label { padding-top: 1px; }
.expr { width: 530px; height: 48px; }
.expr b { font-size: 17px; color: #555; margin-left: 5px; width: 37px; letter-spacing: 0; }
.expr .clip { width: 436px; letter-spacing: .35px; }
.expr em { width: 43px; margin-left: auto; }
.epsbtn { width: 48px; height: 48px; margin-left: 12px; justify-content: center; }
.symbol { margin-top: 12px; height: 44px; }
.btn { justify-content: center; }
.bar { width: 566px; height: 100%; }
.bar i { width: 546px; }
.solid { height: 20px; background: #c33b38; border: 2px solid #8f2f2d; }
.gradient { height: 32px; background: linear-gradient(90deg, #fff, #f00); }
.mini { width: 24px; height: 100%; }
.legend { margin-top: 12px; height: 48px; }
.legend label { padding-top: 4px; }
.fmt { width: 258px; height: 48px; padding-left: 5px; }
.prec { width: 202px; height: 46px; margin: 1px 12px 0; }
.prec .clip { width: 107px; margin-left: 3px; letter-spacing: 0; }
.prec > svg { margin-left: 12px; }
.spin em { width: 29px; margin-left: auto; }
.trim { margin-left: 10px; padding-top: 1px; letter-spacing: 0; }
.ramp { margin-top: 14px; height: 55px; }
.ramp label { padding-top: 3px; }
.tabbar { margin-top: 13px; height: 55px; display: flex; align-items: flex-end; }
.t-on { width: 146px; height: 55px; border: 2px solid #a9a9a9; border-bottom: 0; border-radius: 5px 5px 0 0; background: linear-gradient(#fff, #f6f6f6); display: flex; align-items: center; justify-content: center; padding: 1px 2px 0 0; }
.t-off { width: 172px; height: 51px; border: 2px solid #b5b5b5; border-left: 0; border-radius: 0 5px 0 0; background: linear-gradient(#e9e9e9, #dedede); display: flex; align-items: center; justify-content: center; box-shadow: inset 0 -2px #fff, inset 0 -4px #b5b5b5; border-bottom: 0; letter-spacing: .28px; }
.t-rest { flex: 1; height: 4px; border-top: 2px solid #b5b5b5; border-bottom: 2px solid #fff; }
.table { margin-top: 19px; height: 339px; border: 1px solid #b0b0b0; border-bottom-width: 2px; background: #fff; }
.thead { display: grid; grid-template-columns: 132px 352px 1fr; height: 35px; background: linear-gradient(#fbfbfb, #ebebeb); border-bottom: 2px solid #a9a9a9; color: #000; font-size: 21.500px; letter-spacing: 0; }
.thead div { display: flex; align-items: center; justify-content: space-between; padding: 4px 6px 0 5px; border-right: 2px solid #c0c0c0; }
.thead svg { margin-top: -4px; }
.thead div:last-child { border: 0; }
.trow { display: grid; grid-template-columns: 132px 352px 1fr; height: 36px; align-items: center; letter-spacing: .8px; }
.trow > div { display: flex; align-items: center; padding: 0 0 0 7px; gap: 12px; }
.trow .sw { width: 32px; height: 32px; }
.trow span { padding: 0 0 4px 7px; white-space: nowrap; }
.trow span + span { letter-spacing: .6px; }
.trow .w0 { letter-spacing: .7px; }
.trow .w2 { letter-spacing: .9px; }
.trow .w1 + .w1, .trow span + .w1 { letter-spacing: .76px; }
.mode { margin-top: 13px; height: 48px; }
.mode label { width: 82px; padding-top: 3px; }
.quant { width: 376px; height: 48px; padding: 1px 13px 0 10px; }
.quant span { margin: 0 auto 0 6px; letter-spacing: .4px; }
.mode .cl { margin-left: 72px; width: 108px; }
.num { width: 142px; height: 46px; margin-top: 2px; padding-left: 8px; }
.actions { margin-top: 14px; height: 48px; gap: 12px; }
.actions .btn { height: 48px; }
.classify { width: 160px; letter-spacing: .3px; padding-top: 1px; }
.sq { width: 56px; }
.adv { width: 160px; margin-left: auto; letter-spacing: -.35px; gap: 11px; padding: 1px 2px 0 0; }
.link { margin-top: 20px; height: 28px; gap: 11px; }
.link span { padding-top: 2px; margin-left: -1px; letter-spacing: .2px; }
.rendering { margin-top: 42px; height: 28px; padding-left: 9px; gap: 21px; }
.rendering b { letter-spacing: .58px; padding-top: 1px; }
.scrollbar { width: 28px; border-left: 2px solid #b9b9b9; background: linear-gradient(90deg, #f6f6f6, #fff 30%, #f3f3f3); display: flex; flex-direction: column; }
.sb { height: 27px; display: flex; align-items: center; justify-content: center; background: linear-gradient(#fefefe, #ececec); }
.sb.up { border-bottom: 2px solid #b9b9b9; }
.thumb { height: 25px; background: #e2e2e2; border-bottom: 2px solid #b9b9b9; }
.sb.dn { margin-top: auto; height: 29px; border-top: 2px solid #b9b9b9; }
.footer { margin-top: 12px; height: 48px; display: flex; align-items: center; }
.hist { width: 48px; height: 46px; margin-right: 12px; }
.footer .cb { margin: 0 11px 0 auto; }
.footer span { letter-spacing: .25px; padding-top: 2px; margin-left: -1px; }
.apply { width: 160px; height: 48px; margin-left: 26px; padding-top: 1px; }

.status { height: 61px; padding: 2px 0 0 8px; display: grid; align-items: center; grid-template-columns: 805px 121px 236px 58px 64px 210px 43px 105px 201px 105px 198px 39px 105px 37px 179px 33px; font-size: 21.500px; letter-spacing: .1px; background: radial-gradient(ellipse 130px 90px at 0 100%, #ebebeb 60%, transparent), radial-gradient(ellipse 200px 90px at 100% 100%, #ebebeb 40%, transparent), linear-gradient(#ebebeb, #d0d0d0); }
.status > span { padding-top: 2px; }
.status .field { background: linear-gradient(#f6f6f6, #fbfbfb 6px, #ebebeb); }
.status .field em { background: linear-gradient(#fafafa, #dcdcdc); }
.status .locate { width: 428px; height: 48px; padding-left: 16px; gap: 16px; font-size: 25px; letter-spacing: .1px; color: #7f7f7f; background: linear-gradient(90deg, #fff, transparent 60%), linear-gradient(#fcfcfc, #e9e9e9); }
.coord { width: 227px; height: 44px; justify-content: center; letter-spacing: .7px; padding-top: 1px; }
.scale { width: 186px; height: 48px; }
.scale .clip { width: 135px; letter-spacing: .85px; margin-left: 0; }
.scale em { width: 43px; margin-left: auto; }
.mag { width: 182px; height: 46px; padding-left: 9px; }
.rot { width: 186px; height: 45px; padding-left: 8px; }
.status .spin em { gap: 9px; }
.lock { margin-left: -1px; }
.crs { letter-spacing: .3px; color: #111; }
```
